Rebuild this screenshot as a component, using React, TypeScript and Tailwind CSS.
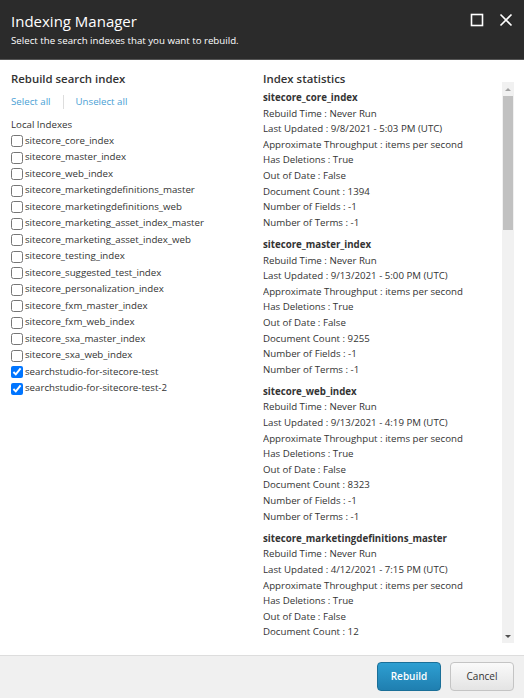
import React from "react";

const localIndexes: { name: string; checked: boolean }[] = [
  { name: "sitecore_core_index", checked: false },
  { name: "sitecore_master_index", checked: false },
  { name: "sitecore_web_index", checked: false },
  { name: "sitecore_marketingdefinitions_master", checked: false },
  { name: "sitecore_marketingdefinitions_web", checked: false },
  { name: "sitecore_marketing_asset_index_master", checked: false },
  { name: "sitecore_marketing_asset_index_web", checked: false },
  { name: "sitecore_testing_index", checked: false },
  { name: "sitecore_suggested_test_index", checked: false },
  { name: "sitecore_personalization_index", checked: false },
  { name: "sitecore_fxm_master_index", checked: false },
  { name: "sitecore_fxm_web_index", checked: false },
  { name: "sitecore_sxa_master_index", checked: false },
  { name: "sitecore_sxa_web_index", checked: false },
  { name: "searchstudio-for-sitecore-test", checked: true },
  { name: "searchstudio-for-sitecore-test-2", checked: true },
];

// only what is visible in the scroll window
const stats = [
  { name: "sitecore_core_index", updated: "9/8/2021 - 5:03 PM (UTC)", count: "1394", full: true },
  { name: "sitecore_master_index", updated: "9/13/2021 - 5:00 PM (UTC)", count: "9255", full: true },
  { name: "sitecore_web_index", updated: "9/13/2021 - 4:19 PM (UTC)", count: "8323", full: true },
  { name: "sitecore_marketingdefinitions_master", updated: "4/12/2021 - 7:15 PM (UTC)", count: "12", full: false },
];

function StatBlock({ name, updated, count, full }: { name: string; updated: string; count: string; full: boolean }) {
  return (
    <div className="mb-[6.6px] leading-[15.6px]">
      <div className="font-bold">{name}</div>
      <div>Rebuild Time : Never Run</div>
      <div>Last Updated : {updated}</div>
      <div>Approximate Throughput : items per second</div>
      <div>Has Deletions : True</div>
      <div>Out of Date : False</div>
      <div>Document Count : {count}</div>
      {full && (
        <>
          <div>Number of Fields : -1</div>
          <div>Number of Terms : -1</div>
        </>
      )}
    </div>
  );
}

function Scrollbar() {
  return (
    <div className="mt-[12px] flex h-[561px] w-[12px] shrink-0 flex-col items-center bg-[#f1f1f1]">
      <div className="flex h-[14px] items-center justify-center">
        <div className="h-0 w-0 border-x-[3px] border-b-[3px] border-x-transparent border-b-[#a3a3a3]" />
      </div>
      <div className="h-[134px] w-[10px] bg-[#c1c1c1]" />
      <div className="flex-1" />
      <div className="flex h-[14px] items-center justify-center">
        <div className="h-0 w-0 border-x-[3px] border-t-[3px] border-x-transparent border-t-[#505050]" />
      </div>
    </div>
  );
}

export default function App() {
  return (
    <div className="flex h-[698px] w-[524px] flex-col overflow-hidden bg-white font-['Open_Sans',sans-serif] text-[#333]">
      <div className="flex h-[60px] shrink-0 border-b border-[#555] bg-[#2b2b2b] pl-[11px] pr-[11px] text-white">
        <div className="flex-1 pt-[11px]">
          <div className="text-[15px] leading-[20px]">Indexing Manager</div>
          <div className="mt-[3px] text-[9.7px] leading-[14px]">Select the search indexes that you want to rebuild.</div>
        </div>
        <div className="flex items-start gap-[15px] pt-[13px]">
          <svg width="14" height="14" viewBox="0 0 14 14" fill="none" stroke="white" strokeWidth="1.6">
            <rect x="1.5" y="1.5" width="11" height="11" />
          </svg>
          <svg width="14" height="14" viewBox="0 0 14 14" fill="none" stroke="white" strokeWidth="1.6">
            <path d="M1.5 1.5 L12.5 12.5 M12.5 1.5 L1.5 12.5" />
          </svg>
        </div>
      </div>

      <div className="flex min-h-0 flex-1 pl-[11px] pr-[10px] pt-[10px]">
        <div className="w-[252px] shrink-0">
          <div className="text-[11.4px] font-semibold leading-[18px]">Rebuild search index</div>
          <div className="mt-[6px] flex items-center text-[9.7px] leading-[16px] text-[#4a9fd5]">
            <span>Select all</span>
            <span className="mx-[12px] h-[14px] w-px bg-[#ddd]" />
            <span>Unselect all</span>
          </div>
          <div className="mt-[7px] text-[9.7px] leading-[16px]">Local Indexes</div>
          <div className="text-[9.7px]">
            {localIndexes.map((ix) => (
              <label key={ix.name} className="flex h-[16.5px] items-center">
                <input type="checkbox" defaultChecked={ix.checked} className="m-0 h-[12px] w-[12px]" />
                <span className="ml-[2px]">{ix.name}</span>
              </label>
            ))}
          </div>
        </div>

        <div className="flex min-w-0 flex-1">
          <div className="flex min-w-0 flex-1 flex-col">
            <div className="text-[11.4px] font-semibold leading-[18px]">Index statistics</div>
            <div className="mt-[2px] h-[553px] overflow-hidden text-[9.7px]">
              {stats.map((s) => (
                <StatBlock key={s.name} {...s} />
              ))}
            </div>
          </div>
          <Scrollbar />
        </div>
      </div>

      <div className="flex h-[43px] shrink-0 items-start justify-end gap-[9px] border-t border-[#ddd] bg-[#f0f0f0] pr-[10px] pt-[6px]">
        <button className="h-[29px] w-[64px] rounded-[4px] border border-[#1a6f98] bg-gradient-to-b from-[#2e9fd2] to-[#1f7fb0] text-[10px] font-semibold text-white">
          Rebuild
        </button>
        <button className="h-[29px] w-[64px] rounded-[4px] border border-[#c4c4c4] bg-gradient-to-b from-[#fafafa] to-[#e4e4e4] text-[10px] text-[#333]">
          Cancel
        </button>
      </div>
    </div>
  );
}
